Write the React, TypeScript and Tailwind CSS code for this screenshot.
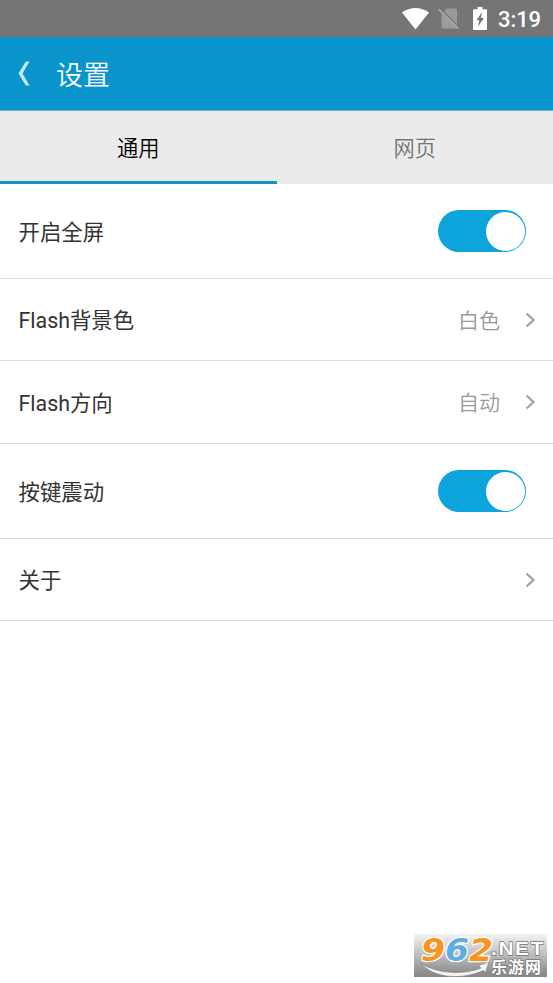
type Setting = {
  label: string;
  height: string;
  toggle?: boolean;
  value?: string;
};

const settings: Setting[] = [
  { label: "开启全屏", height: "h-[95px]", toggle: true },
  { label: "Flash背景色", height: "h-[82px]", value: "白色" },
  { label: "Flash方向", height: "h-[83px]", value: "自动" },
  { label: "按键震动", height: "h-[95px]", toggle: true },
  { label: "关于", height: "h-[82px]" },
];

function StatusBar() {
  return (
    <div className="flex h-[37px] items-center justify-end bg-[#757575] pr-[13px] text-white">
      <svg width="27" height="22" viewBox="0 0 27 22" className="mr-[9px]">
        <path d="M0 4.500C8-1.500 19-1.500 27 4.500L13.500 21.500Z" fill="#fff" />
      </svg>
      <svg width="22" height="22" viewBox="0 0 22 22" className="mr-[13px]">
        <path d="M9 0.500H17.500Q19 0.500 19 2V19Q19 20.500 17.500 20.500H5Q3.500 20.500 3.500 19V6Z" fill="#9b9b9b" />
        <path d="M1.500 0L22.500 20.500" stroke="#757575" strokeWidth="1.600" />
        <path d="M0.700 1.300L20.200 20.800" stroke="#a4a4a4" strokeWidth="2" />
      </svg>
      <svg width="14" height="23" viewBox="0 0 14 23" className="mr-[11px]">
        <path d="M4.500 0H9.500V2.300H13Q14 2.300 14 3.300V22Q14 23 13 23H1Q0 23 0 22V3.300Q0 2.300 1 2.300H4.500Z" fill="#fff" />
        <path d="M9 5L3.500 13.200H6.300L5 19.500L11 11H8Z" fill="#757575" />
      </svg>
      <span className="-mr-px pt-[2px] text-[22px] leading-none font-medium tracking-[-0.1px]">3:19</span>
    </div>
  );
}

function Header() {
  return (
    <header className="flex h-[74px] items-center border-b border-[#65aecd] bg-[#0995cc] pl-[17px]">
      <svg width="13" height="25" viewBox="0 0 13 25" className="mr-[26px]">
        <path d="M8.800 0.500H12.500L5.500 12.500L12.500 24.500H8.800L1.500 12.500Z" fill="#c3ebff" />
      </svg>
      <h1 className="pt-[5px] text-[27px] leading-none font-[350] text-white">设置</h1>
    </header>
  );
}

function Tabs() {
  return (
    <nav className="grid h-[73px] grid-cols-2 bg-[#ebebeb] text-[21.300px] font-[350]">
      <button className="border-b-3 border-[#1593c2] pt-[6px] text-black">通用</button>
      <button className="pt-[3px] text-[#757575]">网页</button>
    </nav>
  );
}

function Toggle() {
  return (
    <span className="flex h-[42px] w-[87.500px] items-center justify-end rounded-full bg-[#0ca4da] pr-[1px]">
      <span className="size-[39px] rounded-full bg-white" />
    </span>
  );
}

function Chevron() {
  return (
    <svg width="11" height="16" viewBox="0 0 11 16" className="ml-[25px] mr-[17px]">
      <path d="M1.500 1.500L8.500 8L1.500 14.500" fill="none" stroke="#a3a3a3" strokeWidth="2.300" />
    </svg>
  );
}

function Watermark() {
  return (
    <div className="absolute left-[414px] top-[934px] h-[43px] w-[133px] bg-linear-to-b from-[#f4f4f4] to-[#858585]">
      <svg width="133" height="63" viewBox="0 -10 133 63" className="-mt-[10px]">
        <path d="M6.500 29C23 40 50 41 67 34L64 31.500L75 28L71.500 38.500L69.500 36.500C49 46 20 45 6.500 29Z" fill="#f2f2f2" stroke="#777" strokeWidth="0.600" />
        <g fontFamily="'DejaVu Sans', sans-serif" fontWeight="700" paintOrder="stroke" strokeLinejoin="round">
          <g fontSize="32" fontStyle="italic" stroke="#fff" strokeWidth="2.500">
            <text x="7" y="26.500" textLength="24" lengthAdjust="spacingAndGlyphs" fill="#f8941f">9</text>
            <text x="31" y="26.500" textLength="24" lengthAdjust="spacingAndGlyphs" fill="#60ade0">6</text>
            <text x="55" y="26.500" textLength="24" lengthAdjust="spacingAndGlyphs" fill="#f8941f">2</text>
          </g>
          <g fontFamily="'Liberation Sans', sans-serif" fontSize="19" fill="#fff" stroke="#777" strokeWidth="1.400">
            <text x="77" y="20.500" textLength="54" lengthAdjust="spacingAndGlyphs" letterSpacing="1.500">.NET</text>
          </g>
        </g>
        <text x="77" y="39" fontFamily="'Noto Sans CJK SC', sans-serif" fontSize="16" fontWeight="700" textLength="50" fill="#fff" stroke="#777" strokeWidth="1.400" paintOrder="stroke">乐游网</text>
      </svg>
    </div>
  );
}

export default function App() {
  return (
    <div className="relative h-[983px] w-[553px] overflow-hidden bg-white font-[Roboto,'Noto_Sans_CJK_SC',sans-serif]">
      <StatusBar />
      <Header />
      <Tabs />
      <main>
        {settings.map((item) => (
          <div
            key={item.label}
            className={`${item.height} flex items-center border-b border-[#d9d9d9] pl-[18.500px] text-[21.400px] text-[#333]`}
          >
            <span className="flex-1 pt-[4px]">{item.label}</span>
            {item.value && <span className="pt-[4px] text-[21px] font-[350] text-[#999]">{item.value}</span>}
            {item.toggle ? (
              <span className="mr-[27.500px]">
                <Toggle />
              </span>
            ) : (
              <Chevron />
            )}
          </div>
        ))}
      </main>
      <Watermark />
    </div>
  );
}
